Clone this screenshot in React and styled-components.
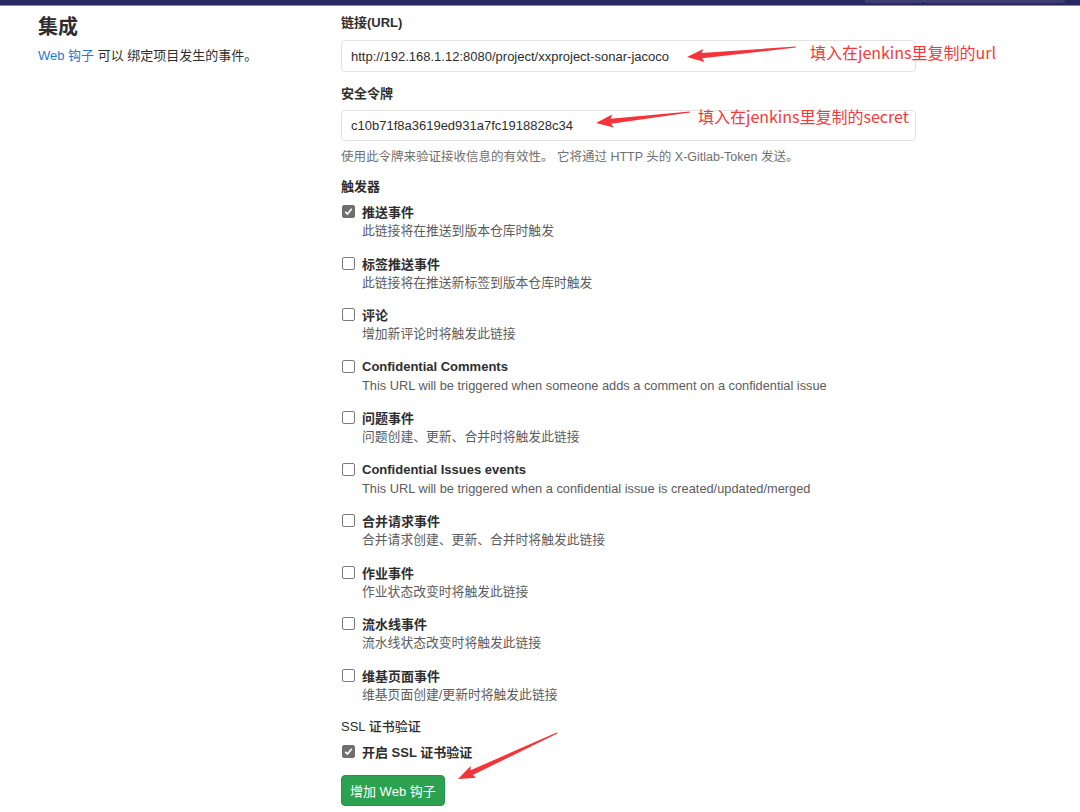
import styled, { createGlobalStyle } from 'styled-components'

const GlobalStyle = createGlobalStyle`
  body {
    margin: 0;
    background: #ffffff;
    font-family: "Liberation Sans", "Noto Sans CJK SC", sans-serif;
    color: #2e2e2e;
  }
`

const triggers = [
  { title: '推送事件', desc: '此链接将在推送到版本仓库时触发', checked: true },
  { title: '标签推送事件', desc: '此链接将在推送新标签到版本仓库时触发' },
  { title: '评论', desc: '增加新评论时将触发此链接' },
  { title: 'Confidential Comments', desc: 'This URL will be triggered when someone adds a comment on a confidential issue' },
  { title: '问题事件', desc: '问题创建、更新、合并时将触发此链接' },
  { title: 'Confidential Issues events', desc: 'This URL will be triggered when a confidential issue is created/updated/merged' },
  { title: '合并请求事件', desc: '合并请求创建、更新、合并时将触发此链接' },
  { title: '作业事件', desc: '作业状态改变时将触发此链接' },
  { title: '流水线事件', desc: '流水线状态改变时将触发此链接' },
  { title: '维基页面事件', desc: '维基页面创建/更新时将触发此链接' },
]

// tail -> tip, drawn as a tapered red annotation arrow
function arrowPoints(x1, y1, x2, y2) {
  const dx = x2 - x1
  const dy = y2 - y1
  const len = Math.sqrt(dx * dx + dy * dy)
  const ux = dx / len
  const uy = dy / len
  const nx = -uy
  const ny = ux
  const headLen = 15
  const bx = x2 - ux * headLen
  const by = y2 - uy * headLen
  const p = (x, y) => `${x.toFixed(1)},${y.toFixed(1)}`
  return [
    p(x1 + nx * 0.6, y1 + ny * 0.6),
    p(bx + nx * 2.6, by + ny * 2.6),
    p(bx - ux * 2 + nx * 6.5, by - uy * 2 + ny * 6.5),
    p(x2, y2),
    p(bx - ux * 2 - nx * 6.5, by - uy * 2 - ny * 6.5),
    p(bx - nx * 2.6, by - ny * 2.6),
    p(x1 - nx * 0.6, y1 - ny * 0.6),
  ].join(' ')
}

function Check({ checked }) {
  return (
    <CheckBox checked={checked}>
      {checked && (
        <svg width="9" height="9" viewBox="0 0 9 9">
          <path d="M1.2 4.8 L3.5 7 L7.8 1.8" stroke="#fff" strokeWidth="1.7" fill="none" />
        </svg>
      )}
    </CheckBox>
  )
}

export default function App() {
  return (
    <>
      <GlobalStyle />
      <Page>
        <TopBar>
          <BarTabs>
            <BarTab w="58px" />
            <BarTab w="140px" />
          </BarTabs>
        </TopBar>
        <Content>
          <Side>
            <Title>集成</Title>
            <Lead>
              <LinkText>Web 钩子</LinkText> 可以 绑定项目发生的事件。
            </Lead>
          </Side>
          <Form>
            <Label top="8px">链接(URL)</Label>
            <Input top="8px" h="32px">http://192.168.1.12:8080/project/xxproject-sonar-jacoco</Input>
            <Label top="13px">安全令牌</Label>
            <Input top="7px" h="31px">c10b71f8a3619ed931a7fc1918828c34</Input>
            <Help>使用此令牌来验证接收信息的有效性。 它将通过 HTTP 头的 X-Gitlab-Token 发送。</Help>
            <Label top="12px">触发器</Label>
            <TriggerList>
              {triggers.map((t) => (
                <Trigger key={t.title}>
                  <TriggerHead>
                    <Check checked={t.checked} />
                    <TriggerTitle>{t.title}</TriggerTitle>
                  </TriggerHead>
                  <TriggerDesc>{t.desc}</TriggerDesc>
                </Trigger>
              ))}
            </TriggerList>
            <Label top="14px" plain>SSL 证书验证</Label>
            <SslRow>
              <Check checked />
              <TriggerTitle>开启 SSL 证书验证</TriggerTitle>
            </SslRow>
            <Button>增加 Web 钩子</Button>
          </Form>
        </Content>

        <Note x="810px" y="42px">填入在jenkins里复制的url</Note>
        <Note x="698px" y="106px">填入在jenkins里复制的secret</Note>
        <Overlay width="1080" height="812">
          <polygon points={arrowPoints(796, 47, 687, 57)} fill="#f5333a" />
          <polygon points={arrowPoints(690, 112, 596, 123)} fill="#f5333a" />
          <polygon points={arrowPoints(557, 733, 458, 779)} fill="#f5333a" />
        </Overlay>
      </Page>
    </>
  )
}

const Page = styled.div`
  position: relative;
  width: 1080px;
  height: 812px;
  overflow: hidden;
  background: #fff;
`

const TopBar = styled.div`
  height: 5px;
  background: #292961;
  border-bottom: 1px solid #8a86ab;
  display: flex;
  justify-content: flex-end;
  padding-right: 15px;
`

const BarTabs = styled.div`
  display: flex;
  height: 3px;
`

const BarTab = styled.div`
  width: ${(p) => p.w};
  height: 3px;
  background: #3d3d72;
  border-left: 1px solid #55558a;
  border-radius: 0 0 3px 3px;
`

const Content = styled.div`
  display: grid;
  grid-template-columns: 303px 575px;
  padding-left: 38px;
`

const Side = styled.div`
  display: flex;
  flex-direction: column;
`

const Title = styled.h3`
  margin: 6px 0 0;
  font-size: 20px;
  line-height: 28px;
  font-weight: 700;
  font-family: "Noto Sans CJK SC", sans-serif;
  color: #2e2e2e;
`

const Lead = styled.p`
  margin: 7px 0 0;
  font-size: 13px;
  line-height: 18px;
  color: #2e2e2e;
`

const LinkText = styled.span`
  color: #1f78d1;
`

const Form = styled.div`
  display: flex;
  flex-direction: column;
  align-items: flex-start;
`

const Label = styled.div`
  margin-top: ${(p) => p.top || '14px'};
  font-size: 13px;
  line-height: 18px;
  font-weight: ${(p) => (p.plain ? 500 : 700)};
  color: #2e2e2e;
`

const Input = styled.div`
  box-sizing: border-box;
  width: 575px;
  height: ${(p) => p.h};
  margin-top: ${(p) => p.top};
  padding: 0 9px;
  display: flex;
  align-items: center;
  border: 1px solid #e3e3e3;
  border-radius: 4px;
  font-size: 13px;
  color: #2e2e2e;
`

const Help = styled.div`
  margin-top: 7px;
  font-size: 12.5px;
  line-height: 18px;
  color: #707070;
`

const TriggerList = styled.div`
  display: flex;
  flex-direction: column;
  gap: 13.5px;
  margin-top: 6px;
`

const Trigger = styled.div`
  display: flex;
  flex-direction: column;
`

const TriggerHead = styled.div`
  display: flex;
  align-items: center;
  gap: 7px;
  height: 19px;
`

const CheckBox = styled.span`
  box-sizing: border-box;
  width: 13px;
  height: 13px;
  margin-left: 1px;
  border-radius: 2px;
  display: flex;
  align-items: center;
  justify-content: center;
  background: ${(p) => (p.checked ? '#6f6f6f' : '#fff')};
  border: 1px solid ${(p) => (p.checked ? '#6f6f6f' : '#7a7a7a')};
`

const TriggerTitle = styled.span`
  font-size: 13px;
  font-weight: 700;
  color: #2e2e2e;
`

const TriggerDesc = styled.span`
  padding-left: 21px;
  font-size: 12.8px;
  line-height: 19px;
  color: #5c5c5c;
`

const SslRow = styled.div`
  display: flex;
  align-items: center;
  gap: 7px;
  height: 19px;
  margin-top: 6px;
`

const Button = styled.button`
  margin-top: 14px;
  height: 31px;
  padding: 0 8px;
  border: 1px solid #23964e;
  border-radius: 4px;
  background: #2ca14f;
  color: #fff;
  font-family: "Liberation Sans", "Noto Sans CJK SC", sans-serif;
  font-size: 13px;
`

const Note = styled.div`
  position: absolute;
  left: ${(p) => p.x};
  top: ${(p) => p.y};
  font-family: "Noto Sans CJK SC", sans-serif;
  font-size: 16px;
  line-height: 20px;
  color: #f23a3a;
  white-space: nowrap;
`

const Overlay = styled.svg`
  position: absolute;
  left: 0;
  top: 0;
  pointer-events: none;
`
